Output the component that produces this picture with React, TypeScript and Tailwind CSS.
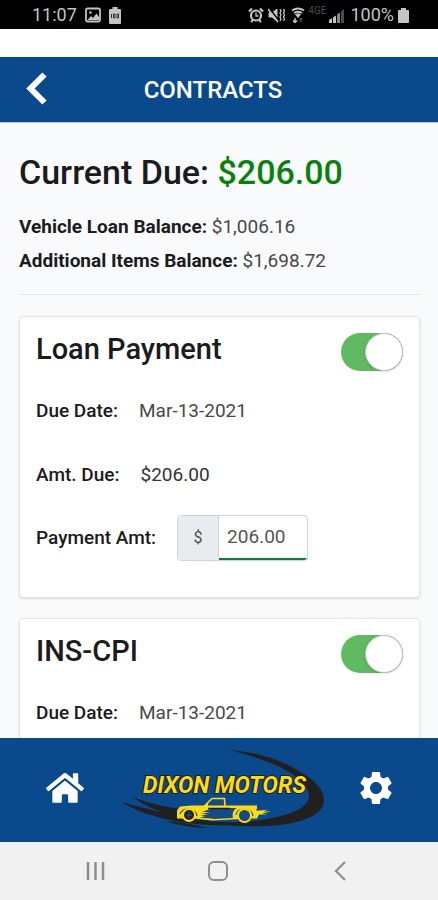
import { useState } from "react";
import { FaHome } from "react-icons/fa";
import { MdSettings } from "react-icons/md";

interface IContract {
  id: string;
  title: string;
  dueDate: string;
  amount?: string;
}

const contracts: IContract[] = [
  { id: "loan", title: "Loan Payment", dueDate: "Mar-13-2021", amount: "206.00" },
  { id: "ins", title: "INS-CPI", dueDate: "Mar-13-2021" },
];

function StatusBar() {
  return (
    <div className="flex h-[29px] shrink-0 items-center justify-between bg-black pt-px pr-[29px] pl-8 text-lg leading-none text-[#c4c4c4]">
      <div className="flex items-center gap-2">
        <span>11:07</span>
        <svg viewBox="0 0 16 16" className="h-4 w-4">
          <rect x="1" y="1.500" width="14" height="13" rx="1.500" fill="none" stroke="currentColor" strokeWidth="1.800" />
          <path d="m2.500 13 3.500-4 2 2 3.500-4.500 2.500 3.500v3Z" fill="currentColor" />
          <circle cx="5.500" cy="5.500" r="1.300" fill="currentColor" />
        </svg>
        <svg viewBox="0 0 12 17" className="h-[17px] w-3">
          <path d="M3.500 0h5v2H11q1 0 1 1v13q0 1-1 1H1q-1 0-1-1V3q0-1 1-1h2.500Z" fill="currentColor" />
          <path d="M2.500 7v4M4.500 7h1.500v4H4.500ZM8 7h1.500v4H8Z" fill="none" stroke="#333" />
        </svg>
      </div>
      <div className="flex items-center">
        <svg viewBox="0 0 16 16" className="h-4 w-4" fill="none" stroke="currentColor" strokeWidth="2.200">
          <circle cx="8" cy="8.500" r="5" />
          <path d="m1 4.500 3-3M15 4.500l-3-3M3 15l2-2M13 15l-2-2" />
          <path d="M8 5.500V9h2.500" strokeWidth="1.300" />
        </svg>
        <svg viewBox="0 0 17 16" className="ml-1 h-4 w-[17px]" fill="none" stroke="currentColor">
          <path d="M1 6h3l5-4v12l-5-4H1Z" fill="currentColor" />
          <path d="m1 1 11 14" stroke="#000" strokeWidth="1.500" />
          <path d="m0 2 10 13" strokeWidth="1.500" />
          <path d="m12 2 1 2-1 2 1 2-1 2 1 2-1 2M15.500 2l1 2-1 2 1 2-1 2 1 2-1 2" strokeWidth="1.300" />
        </svg>
        <svg viewBox="0 0 14 16" className="ml-1.5 h-4 w-3.5" fill="none" stroke="currentColor">
          <path d="M1 3.500Q7-.5 13 3.500M3 6q4-2.500 8 0" strokeWidth="1.800" />
          <path d="M4.500 7.500Q7 6 9.500 7.500L7 10.500Z" fill="currentColor" />
          <path d="M4 11v4M2 13.500l2 2 2-2" strokeWidth="1.500" />
          <path d="M10 15.500V11M8.500 12.500 10 11l1.500 1.500" stroke="#666" />
        </svg>
        <span className="px-[3px] pb-2 text-[10px] text-[#4c4c4c]">4GE</span>
        <svg viewBox="0 0 15 15" className="mr-1.5 h-[15px] w-[15px]">
          <path d="M0 15v-3l3-2v5ZM4 15V9.500l3-2V15Z" fill="currentColor" />
          <path d="M8 15V6.500l3-2V15Z" fill="#858585" />
          <path d="M12 15V3.500L15 1v14Z" fill="#4c4c4c" />
        </svg>
        <span>100%</span>
        <svg viewBox="0 0 11 15" className="ml-1 h-[15px] w-[11px]" fill="currentColor">
          <path d="M3 0h5v2h2q1 0 1 1v11q0 1-1 1H1q-1 0-1-1V3q0-1 1-1h2Z" />
        </svg>
      </div>
    </div>
  );
}

function Header() {
  return (
    <header className="relative mt-7 flex h-[66px] shrink-0 items-center justify-center border-b border-[#b9c9de] bg-[#0a4a8c] pr-3">
      <button type="button" aria-label="Back" className="absolute left-6 text-white">
        <svg viewBox="0 0 24 36" className="h-9 w-6" fill="none" stroke="currentColor" strokeWidth="6">
          <path d="M20.500 2.500 6.500 16.500l14 14" />
        </svg>
      </button>
      <h1 className="text-2xl font-medium text-white">CONTRACTS</h1>
    </header>
  );
}

function Toggle({ label }: { label: string }) {
  const [on, setOn] = useState(true);
  return (
    <label className="relative mt-4 block h-[38px] w-[62px] cursor-pointer">
      <input
        type="checkbox"
        checked={on}
        onChange={() => setOn(!on)}
        aria-label={label}
        className="peer absolute inset-0 appearance-none rounded-full bg-gray-300 checked:bg-[#5fba61]"
      />
      <span className="absolute top-0 left-0 h-[38px] w-[38px] rounded-full border border-[#c4c4c4] bg-white shadow-sm peer-checked:left-6" />
    </label>
  );
}

function ContractCard({ id, title, dueDate, amount }: IContract) {
  return (
    <section className="rounded-sm border border-[#e2e4e8] bg-white px-4 pb-9 shadow">
      <div className="flex justify-between">
        <h2 className="pt-3 text-[29px] leading-10 font-medium">{title}</h2>
        <Toggle label={title} />
      </div>
      <dl className="mt-6 text-[19px] leading-8">
        <div className="flex gap-[21px]">
          <dt className="font-medium">Due Date:</dt>
          <dd className="text-[#484848]">{dueDate}</dd>
        </div>
        {amount && (
          <div className="mt-8 flex gap-[21px]">
            <dt className="font-medium">Amt. Due:</dt>
            <dd className="text-[#333]">${amount}</dd>
          </div>
        )}
      </dl>
      {amount && (
        <div className="mt-6 flex items-center gap-[21px] text-[19px]">
          <label htmlFor={id} className="font-medium">
            Payment Amt:
          </label>
          <div className="flex h-[46px] w-[131px] overflow-hidden rounded-sm border border-[#ced4da]">
            <span className="flex w-[41px] shrink-0 items-center justify-center border-r border-[#ced4da] bg-[#e9ecef] text-base text-[#495057]">
              $
            </span>
            <input
              id={id}
              defaultValue={amount}
              className="w-full min-w-0 border-b-2 border-[#0b7d3e] pl-2 text-[#555] outline-none"
            />
          </div>
        </div>
      )}
    </section>
  );
}

function Logo() {
  return (
    <svg viewBox="5 3 210 100" className="h-[100px] w-[210px]" role="img" aria-label="Dixon Motors">
      <g fill="#221f20">
        <path d="M119 15c28 2 52 10 70 21 16 9 25 19 25 29 0 14-19 22-44 25-21 2-46 2-66-2 20 0 41-1 58-5 20-4 36-10 37-22 0-18-34-35-80-46Z" />
        <path d="M11 67c17 5 36 9 60 14 24 6 44 7 76 6v3c-50 2-98-1-136-23Z" />
        <path d="M23 62c14 6 30 9 46 12l-2 7c-18-4-32-10-44-19Z" />
        <path d="M55 86c15 1 31 4 44 7-16 0-31-3-44-7Z" />
      </g>
      <text
        x="33"
        y="58"
        fill="#fddc16"
        stroke="#221f20"
        strokeWidth="2"
        paintOrder="stroke"
        fontSize="23"
        fontWeight="700"
        fontStyle="italic"
        fontFamily="Roboto, sans-serif"
      >
        DIXON MOTORS
      </text>
      {/* pickup truck */}
      <path d="M94 71.500 102 63.500h12.500l.5 8" fill="#174a83" stroke="#fddc16" strokeWidth="1.600" strokeLinejoin="round" />
      <path
        d="M67 83.500v-8l3-4 12-1h13l3-2v2h49v3l-1 2h5l7-1-5 2h8l-9 2 5 1h-8l-2 4h-5l-40 2-18-2Z"
        fill="#fddc16"
      />
      <path
        d="M103 73h24c-4 2-5 6-4 10l-19 1c-5-1-9-1-14-1l5-2h-5l8-2h-7l9-2h-8Z"
        fill="#174a83"
      />
      <path d="M98 73.500h22" stroke="#221f20" strokeWidth="1.500" />
      <path d="M70 79q2-5 8-5 8 0 9 7M126 80q1-6 8-6 8 0 9 7" fill="none" stroke="#174a83" strokeWidth="1.200" />
      <circle cx="79" cy="80" r="6" fill="#221f20" stroke="#fddc16" strokeWidth="2" />
      <circle cx="134.500" cy="80.500" r="6.500" fill="#174a83" stroke="#fddc16" strokeWidth="2" />
      <path d="M76 80h6M79 77v6" stroke="#31528a" strokeWidth="1" />
    </svg>
  );
}

export default function App() {
  return (
    <div className="flex h-screen flex-col bg-white font-[Roboto,sans-serif] text-[#1b1b1d]">
      <StatusBar />
      <Header />
      <main className="min-h-0 flex-1 overflow-hidden bg-[#f8fafc] pr-[18px] pl-[19px]">
        <div className="border-b border-[#e2e5e8] pt-6 pb-4">
          <p className="text-[34px] leading-[50px] font-medium">
            Current Due: <span className="text-[#0b800b]">$206.00</span>
          </p>
          <p className="mt-[13px] text-[19px] leading-[34px]">
            <b>Vehicle Loan Balance:</b> <span className="text-[#484848]">$1,006.16</span>
          </p>
          <p className="text-[19px] leading-[34px]">
            <b>Additional Items Balance:</b> <span className="text-[#484848]">$1,698.72</span>
          </p>
        </div>
        <div className="mt-[21px] flex flex-col gap-5">
          {contracts.map((contract) => (
            <ContractCard key={contract.id} {...contract} />
          ))}
        </div>
      </main>
      <footer className="flex h-[104px] shrink-0 items-center justify-between bg-[#0a4a8c] pr-[42px] pb-1 pl-[46px] text-white">
        <a href="#home" aria-label="Home">
          <FaHome className="h-[38px] w-[38px]" />
        </a>
        <Logo />
        <a href="#settings" aria-label="Settings">
          <MdSettings className="h-10 w-10" />
        </a>
      </footer>
      <nav className="flex h-[58px] shrink-0 items-center justify-between bg-[#f1f1f1] pr-[86px] pl-[84px] text-[#8e8e8e]">
        <button type="button" aria-label="Recent apps">
          <svg viewBox="0 0 24 24" className="h-6 w-6" fill="none" stroke="currentColor" strokeWidth="2.500">
            <path d="M4 3v18M11.500 3v18M19 3v18" />
          </svg>
        </button>
        <button type="button" aria-label="Home screen">
          <svg viewBox="0 0 24 24" className="h-6 w-6" fill="none" stroke="currentColor" strokeWidth="2">
            <rect x="3" y="3" width="18" height="18" rx="5" />
          </svg>
        </button>
        <button type="button" aria-label="Go back">
          <svg viewBox="0 0 24 24" className="h-6 w-6" fill="none" stroke="currentColor" strokeWidth="2.200">
            <path d="m17 3-9 9 9 9" />
          </svg>
        </button>
      </nav>
    </div>
  );
}
